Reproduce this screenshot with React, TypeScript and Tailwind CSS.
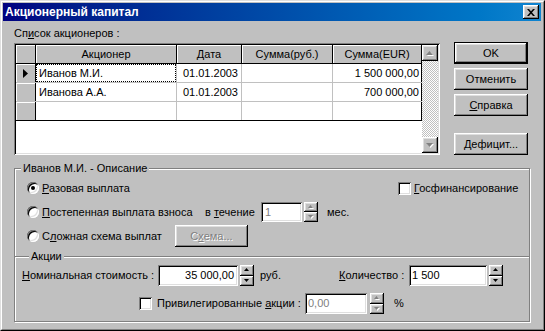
import React from "react";

const raised =
  "bg-[#c0c0c0] shadow-[inset_-1px_-1px_0_#000,inset_1px_1px_0_#fff,inset_-2px_-2px_0_#808080,inset_2px_2px_0_#dfdfdf]";
const sunken =
  "shadow-[inset_1px_1px_0_#808080,inset_-1px_-1px_0_#fff,inset_2px_2px_0_#000,inset_-2px_-2px_0_#dfdfdf]";

const Arrow = ({ up, disabled, big }: { up?: boolean; disabled?: boolean; big?: boolean }) => {
  const w = big ? 7 : 5;
  const h = big ? 4 : 3;
  const pts = up ? `0,${h} ${w / 2},0 ${w},${h}` : `0,0 ${w / 2},${h} ${w},0`;
  return (
    <svg width={w + 1} height={h + 1} viewBox={`0 0 ${w + 1} ${h + 1}`}>
      {disabled && <polygon points={pts} fill="#fff" transform="translate(1,1)" />}
      <polygon points={pts} fill={disabled ? "#808080" : "#000"} />
    </svg>
  );
};

const Spin = ({ disabled, h = "h-[21px]" }: { disabled?: boolean; h?: string }) => (
  <div className={`flex flex-col w-[14px] ${h}`}>
    <div className={`flex-1 flex items-center justify-center ${raised}`}>
      <Arrow up disabled={disabled} />
    </div>
    <div className={`flex-1 flex items-center justify-center ${raised}`}>
      <Arrow disabled={disabled} />
    </div>
  </div>
);

const Radio = ({ checked }: { checked?: boolean }) => (
  <div
    className={`w-[12px] h-[12px] rounded-full bg-white flex items-center justify-center shadow-[inset_1px_1px_0_#808080,inset_-1px_-1px_0_#fff,inset_2px_2px_0_#000,inset_-2px_-2px_0_#dfdfdf]`}
  >
    {checked && <div className="w-[4px] h-[4px] rounded-full bg-black" />}
  </div>
);

const Check = () => <div className={`w-[13px] h-[13px] bg-white ${sunken}`} />;

const Btn = ({ children, def, w = "w-[74px]" }: { children: React.ReactNode; def?: boolean; w?: string }) => (
  <div className={`${w} h-[22px] ${def ? "border border-black" : ""}`}>
    <div className={`h-full flex items-center justify-center ${raised}`}>{children}</div>
  </div>
);

const cols = ["w-[20px]", "w-[141px]", "w-[65px]", "w-[91px]", "w-[89px]"];

const rows = [
  { name: "Иванов М.И.", date: "01.01.2003", eur: "1 500 000,00", cur: true },
  { name: "Иванова А.А.", date: "01.01.2003", eur: "700 000,00" },
  { name: "", date: "", eur: "" },
];

export default function App() {
  return (
    <div className="w-[545px] h-[331px] bg-[#c0c0c0] font-['Liberation_Sans',Arial,sans-serif] text-[11px] text-black border border-t-[#dfdfdf] border-l-[#dfdfdf] border-r-black border-b-black">
      <div className="h-full flex flex-col border border-t-white border-l-white border-r-[#808080] border-b-[#808080] pt-px pl-px pr-[2px]">
        {/* title bar */}
        <div className="h-[18px] flex items-center justify-between pl-[2px] pr-[2px] bg-linear-to-r from-[#000080] to-[#1084d0]">
          <span className="text-white font-bold text-[12px]">Акционерный капитал</span>
          <div className={`w-[16px] h-[14px] flex items-center justify-center ${raised}`}>
            <svg width="8" height="7" viewBox="0 0 8 7">
              <path d="M0 0h2l2 2.2L6 0h2L5 3.5 8 7H6L4 4.8 2 7H0l3-3.5z" fill="#000" />
            </svg>
          </div>
        </div>

        {/* top section */}
        <div className="flex items-start pl-[11px]">
          <div className="flex flex-col">
            <div className="mt-[6px] h-[13px] leading-[13px]">
              Сп<span className="underline">и</span>сок акционеров :
            </div>
            <div className={`mt-[3px] w-[426px] h-[112px] bg-white p-[2px] flex ${sunken}`}>
              <div className="w-[406px] flex flex-col">
                <div className="flex h-[19px]">
                  {["", "Акционер", "Дата", "Сумма(руб.)", "Сумма(EUR)"].map((t, i) => (
                    <div
                      key={i}
                      className={`${cols[i]} h-full border-r border-b border-black bg-[#c0c0c0] shadow-[inset_1px_1px_0_#fff] flex items-center justify-center`}
                    >
                      {t}
                    </div>
                  ))}
                </div>
                {rows.map((r, ri) => (
                  <div
                    key={ri}
                    className={`flex h-[19px] border-b ${ri === 2 ? "border-black" : "border-[#c0c0c0]"}`}
                  >
                    <div
                      className={`${cols[0]} h-full border-r border-black bg-[#c0c0c0] shadow-[inset_1px_1px_0_#fff] flex items-center justify-center`}
                    >
                      {r.cur && (
                        <svg width="5" height="9" viewBox="0 0 5 9">
                          <polygon points="0,0 5,4.5 0,9" fill="#000" />
                        </svg>
                      )}
                    </div>
                    <div className={`${cols[1]} h-full border-r border-[#c0c0c0]`}>
                      <div
                        className={`h-full flex items-center pl-[2px] ${r.cur ? "border border-dotted border-black" : "border border-transparent"}`}
                      >
                        {r.name}
                      </div>
                    </div>
                    <div className={`${cols[2]} h-full border-r border-[#c0c0c0] flex items-center justify-end pr-[3px]`}>
                      {r.date}
                    </div>
                    <div className={`${cols[3]} h-full border-r border-[#c0c0c0]`} />
                    <div className={`${cols[4]} h-full border-r border-black flex items-center justify-end pr-[2px]`}>
                      {r.eur}
                    </div>
                  </div>
                ))}
              </div>
              <div className="w-[16px] flex flex-col">
                <div className={`h-[16px] flex items-center justify-center ${raised}`}>
                  <Arrow up disabled big />
                </div>
                <div className="flex-1 bg-[repeating-conic-gradient(#c0c0c0_0%_25%,#ffffff_0%_50%)] bg-[length:2px_2px]" />
                <div className={`h-[16px] flex items-center justify-center ${raised}`}>
                  <Arrow disabled big />
                </div>
              </div>
            </div>
          </div>

          <div className="ml-[14px] mt-[21px] flex flex-col">
            <Btn def>OK</Btn>
            <div className="mt-[4px]">
              <Btn>Отменить</Btn>
            </div>
            <div className="mt-[4px]">
              <Btn>
                <span className="underline">С</span>правка
              </Btn>
            </div>
            <div className="mt-[17px]">
              <Btn>
                <span className="underline">Д</span>ефицит...
              </Btn>
            </div>
          </div>
        </div>

        {/* description group */}
        <div className="relative mt-[13px] ml-[11px] w-[516px] border border-[#808080] shadow-[1px_1px_0_#fff,inset_1px_1px_0_#fff] pt-[9px] pb-[7px]">
          <div className="absolute left-[6px] -top-[7px] bg-[#c0c0c0] px-[2px] leading-[13px]">
            Иванов М.И. - Описание
          </div>

          <div className="h-[20px] flex items-center pl-[12px]">
            <div className="w-[371px] flex items-center">
              <Radio checked />
              <span className="ml-[3px]">
                <span className="underline">Р</span>азовая выплата
              </span>
            </div>
            <Check />
            <span className="ml-[3px]">
              <span className="underline">Г</span>осфинансирование
            </span>
          </div>

          <div className="mt-[4px] h-[20px] flex items-center pl-[12px]">
            <div className="w-[178px] flex items-center">
              <Radio />
              <span className="ml-[3px]">
                <span className="underline">П</span>остепенная выплата взноса
              </span>
            </div>
            <span className="w-[56px]">
              в <span className="underline">т</span>ечение
            </span>
            <div className={`w-[41px] h-[20px] bg-white flex items-center px-[4px] text-[#808080] ${sunken}`}>1</div>
            <div className="ml-[2px]">
              <Spin disabled h="h-[20px]" />
            </div>
            <span className="ml-[9px]">мес.</span>
          </div>

          <div className="mt-[3px] h-[22px] flex items-center pl-[12px]">
            <div className="w-[148px] flex items-center">
              <Radio />
              <span className="ml-[3px]">
                С<span className="underline">л</span>ожная схема выплат
              </span>
            </div>
            <Btn w="w-[73px]">
              <span className="text-[#808080] [text-shadow:1px_1px_0_#fff]">
                С<span className="underline">х</span>ема...
              </span>
            </Btn>
          </div>

          <div className="relative mt-[9px] h-[2px] border-t border-t-[#808080] border-b border-b-white">
            <div className="absolute left-[14px] -top-[7px] bg-[#c0c0c0] px-[2px] leading-[13px]">Акции</div>
          </div>

          <div className="mt-[7px] h-[21px] flex items-center pl-[7px]">
            <span className="w-[136px]">
              <span className="underline">Н</span>оминальная стоимость :
            </span>
            <div className={`w-[80px] h-[21px] bg-white flex items-center justify-end px-[4px] ${sunken}`}>35 000,00</div>
            <div className="ml-[2px]">
              <Spin />
            </div>
            <span className="ml-[6px] w-[79px]">руб.</span>
            <span className="w-[70px]">
              <span className="underline">К</span>оличество :
            </span>
            <div className={`w-[78px] h-[21px] bg-white flex items-center px-[3px] ${sunken}`}>1 500</div>
            <div className="ml-[2px]">
              <Spin />
            </div>
          </div>

          <div className="mt-[7px] h-[21px] flex items-center pl-[124px]">
            <Check />
            <span className="ml-[5px] w-[148px]">
              Привилегированные <span className="underline">а</span>кции :
            </span>
            <div className={`w-[62px] h-[21px] bg-white flex items-center px-[3px] text-[#808080] ${sunken}`}>0,00</div>
            <div className="ml-[3px]">
              <Spin disabled />
            </div>
            <span className="ml-[10px]">%</span>
          </div>
        </div>
      </div>
    </div>
  );
}
